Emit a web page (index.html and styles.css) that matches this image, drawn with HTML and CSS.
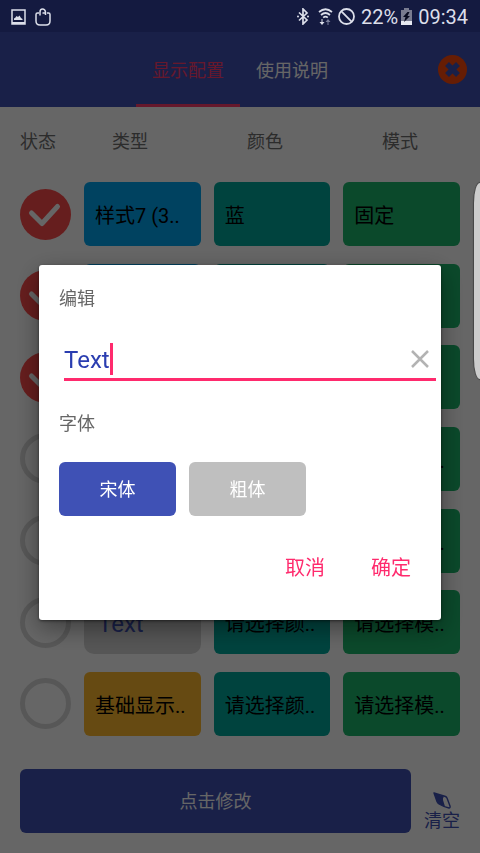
FILE: index.html
```html
<!DOCTYPE html>
<html lang="zh-CN">
<head>
<meta charset="utf-8">
<meta name="viewport" content="width=device-width, initial-scale=1">
<title>显示配置</title>
<link rel="stylesheet" href="styles.css">
</head>
<body>
<svg class="defs" aria-hidden="true">
  <symbol id="tick" viewBox="0 0 51 51"><circle cx="25.500" cy="25.500" r="25.500" fill="#ff4b4b"/><path d="M11.500 24 22 34.500 37.500 17.500" fill="none" stroke="#fff" stroke-width="5" stroke-linecap="round" stroke-linejoin="round"/></symbol>
  <symbol id="ring" viewBox="0 0 51 51"><circle cx="25.500" cy="25.500" r="23" fill="none" stroke="#dadada" stroke-width="5"/></symbol>
</svg>

<div class="status-bar">
  <svg width="15" height="16" viewBox="0 0 15 16"><path d="M1 1h13v14H1z" fill="none" stroke="#dcdfea" stroke-width="1.500"/><path d="M1 13h13v2H1zM3 11V9.500l1.500-1 1-1.500 1.500 1L8.500 6.500 10 9l1.500 1v1z" fill="#dcdfea"/></svg>
  <svg class="bag" width="16" height="18" viewBox="0 0 16 18"><path d="M4 5H2.500Q1 5 1 6.500V13q0 4 4 4h6q4 0 4-4V6.500Q15 5 13.500 5H12M5 7.500V4Q5 1 7.500 1T10.500 4v3M7.500 5H10" fill="none" stroke="#dcdfea" stroke-width="1.500"/></svg>
  <div class="status-right">
    <svg width="12" height="17" viewBox="0 0 12 17"><path d="m2 4.500 8 7.500-4 4V1l4 4-8 7.500" fill="none" stroke="#dcdfea" stroke-width="1.700"/><circle cx="1" cy="8.500" r="1" fill="#dcdfea"/><circle cx="11" cy="8.500" r="1" fill="#dcdfea"/></svg>
    <svg class="wifi" width="15" height="17" viewBox="0 0 15 17"><path d="M1 4q6.500-5.500 13 0M3 7q4.500-4 9 0M5.200 9.700q2.300-2 4.600 0" fill="none" stroke="#dcdfea" stroke-width="1.700"/><path d="M4.500 11v3H6.500L4 17 1.500 14h2v-3z" fill="#dcdfea"/><path d="M9.500 17v-3H7.500L10 11l2.500 3h-2v3z" fill="#7a7f9c"/></svg>
    <svg width="17" height="17" viewBox="0 0 17 17"><circle cx="8.500" cy="8.500" r="7.500" fill="none" stroke="#dcdfea" stroke-width="1.800"/><path d="m3.200 3.200 10.600 10.600" stroke="#dcdfea" stroke-width="1.800"/></svg>
    <span class="percent">22%</span>
    <svg class="battery" width="11" height="17" viewBox="0 0 11 17"><path d="M0 2h3V0h5v2h3v15H0z" fill="#797c90"/><path d="M0 13h11v4H0z" fill="#e8eaf2"/><path d="m6.500 4-4.500 5h2.500L3 14l6-6H6.500L8.500 4z" fill="#080b20"/></svg>
    <span>09:34</span>
  </div>
</div>

<div class="app">
  <header class="top-bar">
    <nav class="tabs">
      <a class="tab active" href="#config">显示配置</a>
      <a class="tab" href="#help">使用说明</a>
    </nav>
    <button class="close" type="button" aria-label="关闭">
      <svg width="29" height="29" viewBox="0 0 29 29"><circle cx="14.500" cy="14.500" r="14.500" fill="#ff4a0a"/><path d="m9 9 11 11M20 9 9 20" stroke="#3f51b5" stroke-width="5.500"/></svg>
    </button>
  </header>

  <main class="content">
    <div class="labels"><span>状态</span><span>类型</span><span>颜色</span><span>模式</span></div>
    <div class="rows">
      <div class="row">
        <label class="check"><input type="checkbox" checked aria-label="第1行"><svg><use href="#tick"/></svg></label>
        <button class="card blue" type="button">样式7 (3..</button><button class="card teal" type="button">蓝</button><button class="card green" type="button">固定</button>
      </div>
      <div class="row">
        <label class="check"><input type="checkbox" checked aria-label="第2行"><svg><use href="#tick"/></svg></label>
        <button class="card blue" type="button"></button><button class="card teal" type="button"></button><button class="card green" type="button"></button>
      </div>
      <div class="row">
        <label class="check"><input type="checkbox" checked aria-label="第3行"><svg><use href="#tick"/></svg></label>
        <button class="card blue" type="button"></button><button class="card teal" type="button"></button><button class="card green" type="button"></button>
      </div>
      <div class="row">
        <label class="check"><input type="checkbox" aria-label="第4行"><svg><use href="#ring"/></svg></label>
        <button class="card blue" type="button"></button><button class="card teal" type="button"></button><button class="card green" type="button">请选择模..</button>
      </div>
      <div class="row">
        <label class="check"><input type="checkbox" aria-label="第5行"><svg><use href="#ring"/></svg></label>
        <button class="card blue" type="button"></button><button class="card teal" type="button"></button><button class="card green" type="button">请选择模..</button>
      </div>
      <div class="row">
        <label class="check"><input type="checkbox" aria-label="第6行"><svg><use href="#ring"/></svg></label>
        <button class="card plain" type="button">Text</button><button class="card teal" type="button">请选择颜..</button><button class="card green" type="button">请选择模..</button>
      </div>
      <div class="row">
        <label class="check"><input type="checkbox" aria-label="第7行"><svg><use href="#ring"/></svg></label>
        <button class="card amber" type="button">基础显示..</button><button class="card teal" type="button">请选择颜..</button><button class="card green" type="button">请选择模..</button>
      </div>
    </div>
    <div class="actions">
      <button class="modify" type="button">点击修改</button>
      <button class="clear-all" type="button">
        <svg width="18" height="17" viewBox="0 0 18 17"><path d="M1 1 12.500 4.500q1 .5 1.500 1.500L17 14q.5 2-1 2-5-1-10-4-1.500-1-2-2.500Z" fill="none" stroke="#3f51b5" stroke-width="1.400" stroke-linejoin="round"/><path d="M1 1 11 4.500Q9.500 6 10 8l2 6.500q-3-1-6-2.500-1.500-1-2-2.500Z" fill="#3f51b5"/></svg>
        <span>清空</span>
      </button>
    </div>
  </main>
</div>

<div class="overlay">
  <div class="dialog" role="dialog" aria-label="编辑">
    <label class="caption" for="content">编辑</label>
    <div class="field">
      <input id="content" type="text" value="Text">
      <span class="caret"></span>
      <button class="clear" type="button" aria-label="清除"><svg width="18" height="18" viewBox="0 0 18 18"><path d="m1 1 16 16M17 1 1 17" stroke="#b3b3b3" stroke-width="2.500"/></svg></button>
    </div>
    <div class="caption">字体</div>
    <div class="fonts">
      <button class="font selected" type="button">宋体</button>
      <button class="font" type="button">粗体</button>
    </div>
    <div class="choices">
      <button type="button">取消</button>
      <button type="button">确定</button>
    </div>
  </div>
</div>
<div class="edge-handle"></div>
</body>
</html>
```
FILE: styles.css
```css
* {
  box-sizing: border-box;
}

body {
  margin: 0;
  min-height: 100vh;
  display: flex;
  flex-direction: column;
  background: #fff;
  font-family: Roboto, "Noto Sans CJK SC", sans-serif;
  font-size: 18px;
  line-height: 24px;
}

button {
  border: 0;
  padding: 0;
  background: none;
  font: inherit;
  color: inherit;
  cursor: pointer;
}

svg {
  display: block;
}

.defs {
  position: absolute;
  width: 0;
  height: 0;
}

.status-bar {
  height: 32px;
  padding: 1px 12px 0 11px;
  display: flex;
  align-items: center;
  background: #141a40;
  color: #dcdfea;
  font-size: 20px;
}

.bag {
  margin-left: 9px;
}

.status-right {
  margin-left: auto;
  display: flex;
  align-items: center;
}

.wifi {
  margin: 0 5px 0 9px;
}

.percent {
  margin-left: 6px;
}

.battery {
  margin: 0 6px 0 3px;
}

.app {
  flex: 1;
  display: flex;
  flex-direction: column;
}

.top-bar {
  height: 75px;
  padding: 0 13px;
  display: grid;
  grid-template-columns: 1fr auto 1fr;
  align-items: center;
  background: #3f51b5;
}

.tabs {
  grid-column: 2;
  height: 100%;
  display: flex;
}

.tab {
  padding: 5px 16px 0;
  display: flex;
  align-items: center;
  border-bottom: 3px solid transparent;
  color: #fff;
  text-decoration: none;
}

.tab.active {
  color: #ff3d6e;
  border-color: #ff3d6e;
}

.close {
  justify-self: end;
}

.content {
  flex: 1;
  padding: 23px 20px 20px;
  display: flex;
  flex-direction: column;
}

.labels {
  display: grid;
  grid-template-columns: 92px 135fr 135fr 78fr;
  color: #6e6e6e;
}

.rows {
  flex: 1;
  margin: 28px 0 33px;
  display: flex;
  flex-direction: column;
  justify-content: space-between;
}

.row {
  display: grid;
  grid-template-columns: 51px 1fr 1fr 1fr;
  column-gap: 13px;
  align-items: center;
}

.check {
  display: grid;
}

.check input,
.check svg {
  grid-area: 1 / 1;
  width: 51px;
  height: 51px;
  margin: 0;
}

.check input {
  appearance: none;
}

.check svg {
  pointer-events: none;
}

.card {
  height: 64px;
  padding: 4px 11px 0;
  border-radius: 6px;
  overflow: hidden;
  white-space: nowrap;
  text-align: left;
  font-size: 20px;
  color: #000;
}

.blue { background: #00a5f0; }
.teal { background: #00a89b; }
.green { background: #1cb66b; }
.amber { background: #ffb92d; }

.plain {
  border-radius: 10px;
  padding-left: 14px;
  background: #d6d6d6;
  color: #3f51b5;
  font-size: 24px;
}

.actions {
  display: flex;
  align-items: flex-end;
  gap: 13px;
}

.modify {
  flex: 1;
  height: 64px;
  padding-top: 2px;
  border-radius: 6px;
  background: #3f51b5;
  color: #fff;
}

.clear-all {
  display: flex;
  flex-direction: column;
  align-items: center;
  color: #3f51b5;
}

.overlay {
  position: fixed;
  inset: 32px 0 0;
  padding: 0 39px;
  display: flex;
  align-items: center;
  background: rgba(0, 0, 0, 0.6);
}

.dialog {
  flex: 1;
  padding: 22px 20px 38px;
  border-radius: 3px;
  background: #fff;
  box-shadow: 0 8px 24px rgba(0, 0, 0, 0.4), 0 1px 3px rgba(0, 0, 0, 0.5);
}

.caption {
  display: block;
  color: #666;
}

.field {
  height: 40px;
  margin: 30px -15px 31px 5px;
  display: flex;
  align-items: flex-start;
  border-bottom: 3px solid #ff2a6d;
}

.field input {
  field-sizing: content;
  height: 37px;
  border: 0;
  padding: 0;
  outline: 0;
  background: none;
  color: #2a3db0;
  font: inherit;
  font-size: 24px;
}

.caret {
  width: 3px;
  height: 32px;
  margin-top: 2px;
  background: #ff2a6d;
}

.clear {
  margin: 9px 7px 0 auto;
}

.fonts {
  margin-top: 26px;
  display: flex;
  gap: 13px;
}

.font {
  width: 117px;
  height: 54px;
  padding-top: 2px;
  border-radius: 6px;
  background: #bfbfbf;
  color: #fff;
}

.font.selected {
  background: #3f51b5;
}

.choices {
  margin: 38px 10px 0 0;
  display: flex;
  justify-content: flex-end;
  gap: 46px;
  color: #ff2a6d;
  font-size: 20px;
  line-height: 28px;
}

.edge-handle {
  position: fixed;
  top: 183px;
  right: 0;
  width: 6px;
  height: 196px;
  border-radius: 6px 0 0 6px / 20px 0 0 20px;
  background: #ccc;
  box-shadow: 0 0 1px 1px #444;
}
```
